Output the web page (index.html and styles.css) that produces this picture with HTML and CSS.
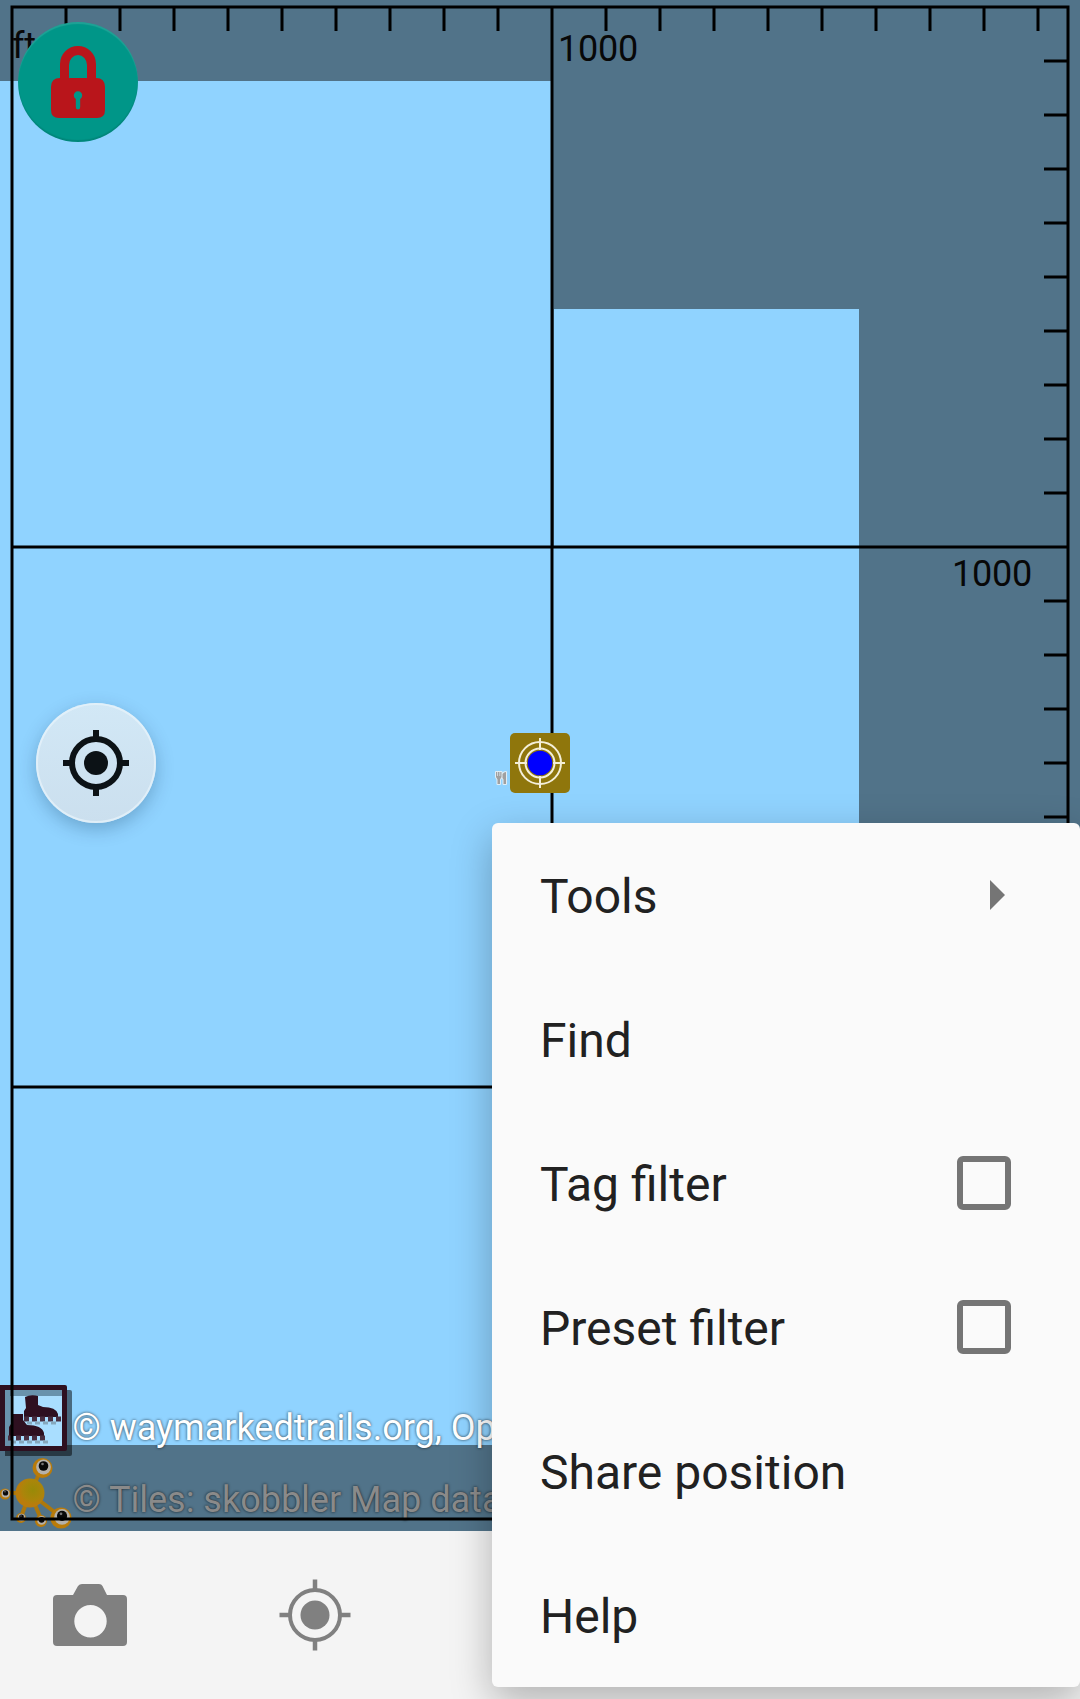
FILE: index.html
```html
<!DOCTYPE html>
<html lang="en">
<head>
<meta charset="utf-8">
<title>Map</title>
<link rel="stylesheet" href="styles.css">
</head>
<body>
<div class="screen">
  <main class="map">
    <svg class="canvas" viewBox="0 0 1080 1531">
      <defs>
        <radialGradient id="body" cx=".6" cy=".4"><stop offset="0" stop-color="#988a08"/><stop offset=".7" stop-color="#ab850a"/><stop offset="1" stop-color="#b97c0c"/></radialGradient>
        <g id="eye"><circle r="10" fill="#b97b0a"/><circle cx="1" cy="-1" r="7.4" fill="#b5b1aa"/><circle cx="1" cy="-2" r="4.8" fill="#090909"/><circle cx="0" cy="-4" r="1.3" fill="#777"/></g>
      </defs>
      <path class="tile" d="M0 81H553V309H859V1445H0Z"/>
      <path d="M552 300H554V547H552Z" fill="#517389"/>
      <g class="trail">
        <path d="M5 1390H70Q72 1390 72 1392V1454Q72 1456 70 1456H5Z" fill="#000" opacity=".5"/>
        <path d="M0 1385H65Q67 1385 67 1387V1449Q67 1451 65 1451H0Z" fill="#2e1020"/>
        <path d="M5 1390H62V1446H5Z" fill="#a9deff"/>
        <path d="M5 1390H62V1396H10V1446H5Z" fill="#6992ac"/>
        <g fill="#2e1020">
          <path d="M25 1397Q31 1394 38 1396V1405L43 1407Q56 1407 58 1414V1417H24V1411L26 1408Z"/>
          <path d="M11 1414H23V1420L27 1425Q42 1425 44 1433V1436H9V1427L11 1424Z"/>
        </g>
        <g fill="none" stroke-width="5" stroke-dasharray="5 3"><path stroke="#472e40" d="M24 1419H61"/><path stroke="#472e40" d="M8 1438H46"/><path stroke="#85a8bd" stroke-width="3" d="M27 1423H59M11 1442H49"/></g>
      </g>
      <g class="mascot">
        <path d="M30 1494L43 1465M30 1493H7M30 1493L21 1517M30 1493L41 1519M30 1493L62 1518" stroke="#ad780c" stroke-width="4" fill="none"/>
        <circle cx="30" cy="1493" r="14.500" fill="url(#body)"/>
        <use href="#eye" transform="translate(42.500 1468)"/>
        <use href="#eye" transform="translate(5 1494) scale(.55)"/>
        <use href="#eye" transform="translate(21 1518) scale(.5)"/>
        <use href="#eye" transform="translate(41 1521) scale(.6)"/>
        <use href="#eye" transform="translate(61 1518) scale(1.06)"/>
      </g>
      <g class="credit">
        <text x="72.500" y="1439.600">© waymarkedtrails.org, Op</text>
        <text x="72.500" y="1511.600" class="dim">© Tiles: skobbler Map data</text>
      </g>
      <g class="grid">
        <path d="M12 7H1068V1519H12ZM552 7V1519M12 547H1068M12 1087H1068"/>
        <path d="M66 7V31M120 7V31M174 7V31M228 7V31M282 7V31M336 7V31M390 7V31M444 7V31M498 7V31M606 7V31M660 7V31M714 7V31M768 7V31M822 7V31M876 7V31M930 7V31M984 7V31M1038 7V31"/>
        <path d="M1044 61H1068M1044 115H1068M1044 169H1068M1044 223H1068M1044 277H1068M1044 331H1068M1044 385H1068M1044 439H1068M1044 493H1068M1044 601H1068M1044 655H1068M1044 709H1068M1044 763H1068M1044 817H1068"/>
      </g>
      <g class="scale"><text x="12" y="58">ft</text><text x="558" y="61">1000</text><text x="952" y="586">1000</text></g>
      <g stroke="#e0edf5" stroke-width="2" stroke-linejoin="round" paint-order="stroke" fill="#a0a0a0">
        <path d="M496 772H497.300V776H498V772H499.500V776H500.200V772H501.500V777L500 779.500V784H497.500V779.500L496 777ZM502.500 774Q504 772 506 772V784H503.500V779.500L502.500 778Z"/>
      </g>
      <rect x="510" y="733" width="60" height="60" rx="5" fill="#8f760c"/>
      <g fill="none" stroke="#f4efd9" stroke-width="2">
        <circle cx="540" cy="763" r="21"/><circle cx="540" cy="763" r="14.500"/>
        <path d="M540 738V750M540 776V788M515 763H527M553 763H565"/>
      </g>
      <circle cx="540" cy="763" r="12.300" fill="#00f"/>
    </svg>
    <button class="fab fab-lock" aria-label="Unlock">
      <svg viewBox="0 0 120 120"><path fill="#b9151b" fill-rule="evenodd" d="M42 56V42A18 18 0 0 1 78 42V56Q87 56 87 65V88Q87 96 79 96H41Q33 96 33 88V65Q33 56 42 56ZM51 56H69V43A9 10 0 0 0 51 43ZM57.800 77V85Q57.800 87.500 60 87.500T62.200 85V77A4.200 4.200 0 1 0 57.800 77Z"/></svg>
    </button>
    <button class="fab fab-gps" aria-label="My location">
      <svg viewBox="0 0 120 120"><g fill="none" stroke="#0c1216" stroke-width="6"><circle cx="60" cy="60" r="24"/><path d="M60 27V36M60 84V93M27 60H36M84 60H93"/></g><circle cx="60" cy="60" r="12" fill="#0c1216"/></svg>
    </button>
  </main>
  <nav class="toolbar">
    <button class="tool" aria-label="Camera"><svg viewBox="0 0 96 96"><path fill="#808080" fill-rule="evenodd" d="M15 28H31L36 19Q37.500 17 40 17H57Q59.500 17 60.500 19L65 28H81Q85 28 85 32V75Q85 79 81 79H15Q11 79 11 75V32Q11 28 15 28ZM48.500 38A16.200 16.200 0 1 0 48.500 70.400A16.200 16.200 0 1 0 48.500 38Z"/></svg></button>
    <button class="tool" aria-label="GPS"><svg viewBox="0 0 96 96"><g fill="none" stroke="#808080" stroke-width="4"><circle cx="48" cy="48" r="25"/><path d="M48 12.500V23M48 73V83.500M12.500 48H23M73 48H83.500" stroke-width="4.500"/></g><circle cx="48" cy="48" r="14.500" fill="#808080"/></svg></button>
  </nav>
  <ul class="menu">
    <li><span class="label">Tools</span><svg class="arrow" viewBox="0 0 15 30"><path d="M0 0L15 15L0 30Z"/></svg></li>
    <li><span class="label">Find</span></li>
    <li><span class="label">Tag filter</span><span class="check"></span></li>
    <li><span class="label">Preset filter</span><span class="check"></span></li>
    <li><span class="label">Share position</span></li>
    <li><span class="label">Help</span></li>
  </ul>
</div>
</body>
</html>
```
FILE: styles.css
```css
* { box-sizing: border-box; }
body { margin: 0; font-family: Roboto, sans-serif; }
button { padding: 0; border: 0; background: none; }
svg { display: block; }

.screen {
  position: relative;
  display: flex;
  flex-direction: column;
  width: 1080px;
  height: 1699px;
  overflow: hidden;
}

.map { position: relative; height: 1531px; background: #517389; }
.canvas { width: 100%; height: 100%; }
.tile { fill: #90d3ff; }
.grid { fill: none; stroke: #000; stroke-width: 3; }
.scale { font-size: 36px; letter-spacing: -.2px; fill: #080808; }
.credit { font-size: 36px; fill: #fff; text-shadow: 0 0 3px rgba(0, 0, 0, .75); }
.credit .dim { fill: #8a8a8a; }

.fab { position: absolute; width: 120px; height: 120px; border-radius: 50%; }
.fab-lock {
  left: 18px;
  top: 22px;
  background: #009688;
  box-shadow: inset 0 2px 1px rgba(255, 255, 255, .12), inset 0 -2px 1px rgba(0, 0, 0, .1);
}
.fab-gps {
  left: 36px;
  top: 703px;
  background: linear-gradient(#d2e8f6, #cbdfee);
  box-shadow: inset 0 0 0 2px rgba(232, 243, 251, .7), 0 6px 18px rgba(0, 40, 70, .26);
}

.toolbar {
  display: flex;
  gap: 129px;
  flex: 1;
  padding: 36px 42px;
  background: #f4f4f4;
}
.tool { width: 96px; height: 96px; }

.menu {
  position: absolute;
  left: 492px;
  top: 823px;
  width: 588px;
  margin: 0;
  padding: 0;
  list-style: none;
  border-radius: 6px;
  background: #fafafa;
  color: #212121;
  font-size: 48px;
  box-shadow: 0 14px 40px rgba(0, 0, 0, .28);
}
.menu li {
  display: flex;
  align-items: center;
  justify-content: space-between;
  height: 144px;
  padding: 0 69px 0 48px;
}
.label { padding-top: 2px; }
.arrow { width: 15px; height: 30px; margin-right: 6px; fill: #757575; }
.check {
  width: 54px;
  height: 54px;
  border: 6px solid #757575;
  border-radius: 6px;
}
```
